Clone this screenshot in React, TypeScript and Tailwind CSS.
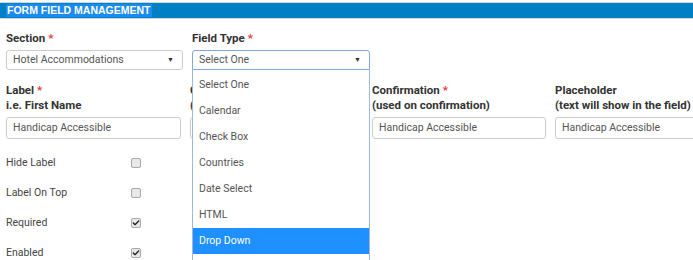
import { Check } from "lucide-react";

const fieldTypes = ["Select One", "Calendar", "Check Box", "Countries", "Date Select", "HTML", "Drop Down", "Email"];

function Req() {
  return <span className="ml-[3px] text-[#e53935]">*</span>;
}

function Caret() {
  return <span className="text-[7px] leading-none text-[#333]">▼</span>;
}

function Box({ checked }: { checked?: boolean }) {
  return (
    <span className="flex h-[10px] w-[10px] items-center justify-center rounded-[2px] border border-[#a9a9a9] bg-[#e8e8e8]">
      {checked && <Check size={8} strokeWidth={4} className="text-[#222]" />}
    </span>
  );
}

export default function App() {
  const flags = [
    { label: "Hide Label", checked: false },
    { label: "Label On Top", checked: false },
    { label: "Required", checked: true },
    { label: "Enabled", checked: true },
  ];

  return (
    <div className="relative h-[260px] w-[693px] overflow-hidden bg-white font-['Roboto','Liberation_Sans',sans-serif] text-[10.5px] text-[#333]">
      <div className="mt-[2px] border-y border-[#cfd8de] bg-[#0080c4] py-[1px]">
        <div className="flex h-[13px] items-center px-[6px]">
          <span className="bg-[#1a8cf0] px-[1px] font-['Liberation_Sans',sans-serif] text-[10.5px] font-bold leading-[13px] text-white">
            FORM FIELD MANAGEMENT
          </span>
        </div>
      </div>

      <div className="mt-[12px] grid grid-cols-[177px_178px] gap-x-[9px] px-[6px]">
        <div className="text-[11.5px] font-bold leading-[14px]">
          Section<Req />
        </div>
        <div className="text-[11.5px] font-bold leading-[14px]">
          Field Type<Req />
        </div>
        <div className="mt-[5px] flex h-[20px] items-center justify-between rounded-[3px] border border-[#ccc] pl-[6px] pr-[8px] text-[#555]">
          Hotel Accommodations
          <Caret />
        </div>
        <div className="relative mt-[5px]">
          <div className="flex h-[20px] items-center justify-between rounded-t-[3px] border border-[#7fa9dc] pl-[6px] pr-[8px] text-[#555]">
            Select One
            <Caret />
          </div>
          <div className="absolute left-0 right-0 top-[20px] z-10 border-x border-[#9db8dd] bg-white pt-[2px]">
            {fieldTypes.map((t) => (
              <div
                key={t}
                className={`flex h-[26px] items-center pl-[6px] ${
                  t === "Drop Down" ? "bg-[#1e90ff] text-white" : "text-[#555]"
                }`}
              >
                {t}
              </div>
            ))}
          </div>
        </div>
      </div>

      <div className="mt-[13px] grid grid-cols-[184px_182px_183px_1fr] pl-[6px] text-[11.5px]">
        <div className="font-bold leading-[15px]">
          Label<Req />
          <br />
          i.e. First Name
        </div>
        <div className="font-bold leading-[15px]">
          Caption
          <br />
          (used on form)
        </div>
        <div className="font-bold leading-[15px]">
          Confirmation<Req />
          <br />
          (used on confirmation)
        </div>
        <div className="whitespace-nowrap font-bold leading-[15px]">
          Placeholder
          <br />
          (text will show in the field)
        </div>
        {[175, 175, 174, 150].map((w, i) => (
          <div
            key={i}
            style={{ width: w }}
            className="mt-[4px] flex h-[22px] items-center rounded-[3px] border border-[#ccc] pl-[6px] text-[10.5px] text-[#555]"
          >
            Handicap Accessible
          </div>
        ))}
      </div>

      <div className="mt-[17px] flex w-[147px] flex-col gap-y-[16px] px-[6px]">
        {flags.map((f) => (
          <div key={f.label} className="flex h-[14px] items-center justify-between">
            <span className="text-[#444]">{f.label}</span>
            <Box checked={f.checked} />
          </div>
        ))}
      </div>
    </div>
  );
}
